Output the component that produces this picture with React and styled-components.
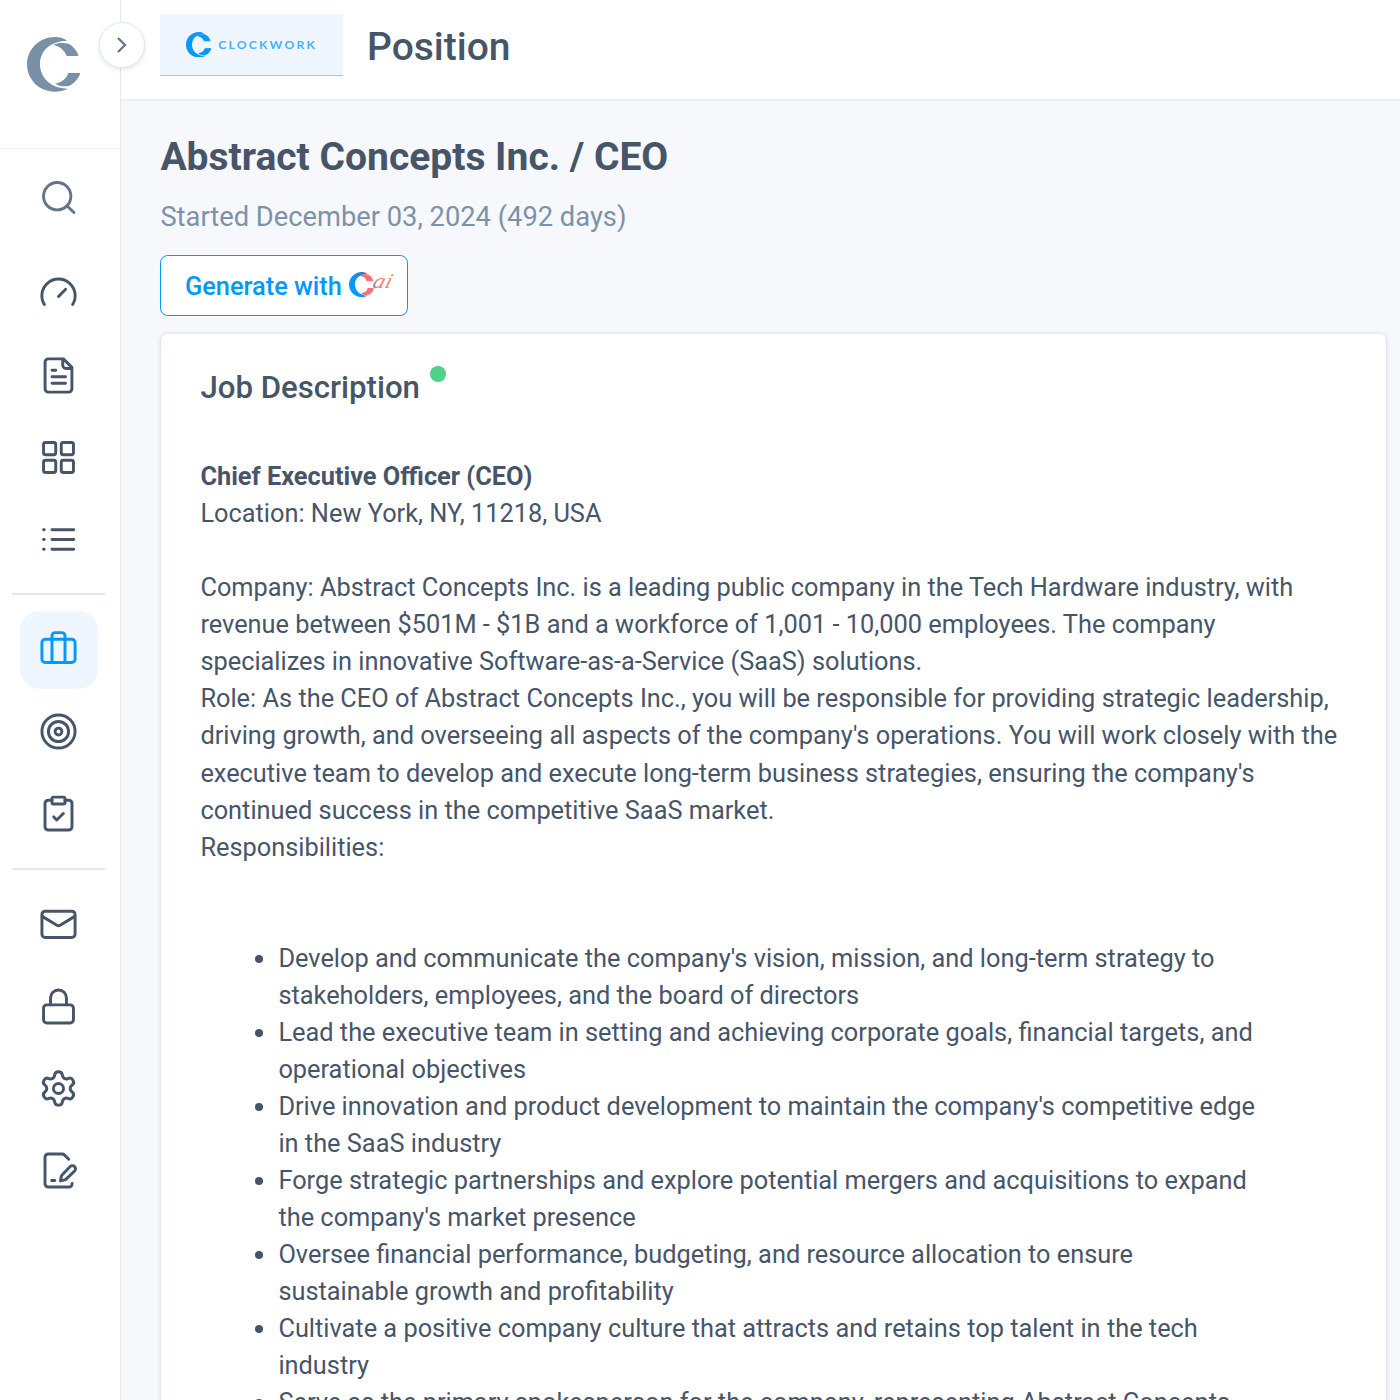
import React from "react";
import styled, { createGlobalStyle } from "styled-components";

const GlobalStyle = createGlobalStyle`
  * { box-sizing: border-box; }
  body { margin: 0; background: #f6f8fc; font-family: Roboto, "Liberation Sans", sans-serif; color: #475569; }
`;

const Shell = styled.div`
  display: flex;
  width: 1400px;
  height: 1400px;
  overflow: hidden;
`;

const Sidebar = styled.aside`
  position: relative;
  flex: none;
  width: 121px;
  background: #fff;
  border-right: 1px solid #e2e8f0;
`;

const Brand = styled.div`
  height: 149px;
  padding: 37px 0 0 27px;
  border-bottom: 1px solid #f1f5f9;
  color: #7a90a8;
`;

const Toggle = styled.button`
  position: absolute;
  z-index: 2;
  top: 22px;
  left: 99px;
  display: flex;
  align-items: center;
  justify-content: center;
  width: 46px;
  height: 46px;
  padding: 0;
  border: 1px solid #e2e8f0;
  border-radius: 50%;
  background: #fff;
  color: #64748b;
  box-shadow: 0 2px 4px rgba(71, 85, 105, 0.14);
`;

const SearchSlot = styled.div`
  display: flex;
  height: 105.8px;
  padding: 9.8px 0 0 19.5px;
`;

const NavGroup = styled.nav`
  display: flex;
  flex-direction: column;
  gap: 3.9px;
  padding-left: 19.5px;
`;

const NavItem = styled.a`
  display: flex;
  align-items: center;
  justify-content: center;
  width: 78px;
  height: 78px;
  border-radius: 19.5px;
  color: ${(p) => (p.$active ? "#0399f7" : p.$soft ? "#64748b" : "#475569")};
  background: ${(p) => (p.$active ? "#eff6ff" : "transparent")};
`;

const Divider = styled.div`
  width: 93px;
  height: 2px;
  margin: ${(p) => p.$margin};
  background: #e2e8f0;
`;

const Main = styled.div`
  flex: 1;
  min-width: 0;
  display: flex;
  flex-direction: column;
`;

const Header = styled.header`
  flex: none;
  display: flex;
  align-items: flex-start;
  gap: 24px;
  height: 101px;
  padding: 14px 39px 0;
  background: #fff;
  border-bottom: 2px solid #e9eef4;
`;

const ClientLogo = styled.div`
  display: flex;
  align-items: center;
  gap: 7.2px;
  width: 183px;
  height: 62px;
  padding-left: 26.4px;
  background: #eff6ff;
  border-bottom: 1px solid #90cdf9;
  color: #0399f7;
`;

const ClientName = styled.span`
  padding-top: 2px;
  font: 700 12.2px/1 Lato, sans-serif;
  letter-spacing: 2.2px;
  color: #45b2fa;
`;

const PageName = styled.h1`
  margin: 10px 0 0;
  font-size: 39px;
  line-height: 46px;
  font-weight: 500;
`;

const Content = styled.main`
  padding: 33px 13px 0 39px;
`;

const Title = styled.h2`
  margin: 0;
  padding-left: 0.4px;
  font-size: 39px;
  line-height: 46px;
  font-weight: 700;
`;

const Started = styled.p`
  margin: 21px 0 0;
  padding-left: 0.4px;
  font-size: 27.3px;
  line-height: 32px;
  color: #7c92aa;
`;

const Generate = styled.button`
  display: flex;
  align-items: center;
  gap: 7px;
  width: 248px;
  height: 61px;
  margin-top: 22px;
  padding: 3px 0 0 24px;
  border: 1px solid #0399f7;
  border-radius: 7.8px;
  background: #fff;
  color: #0399f7;
  font: 500 25.35px/1 Roboto, sans-serif;
`;

const Card = styled.section`
  height: 1200px;
  margin-top: 16px;
  padding: 38px 39px 0 39.4px;
  border: 1px solid #e2e8f0;
  border-top: 2px solid #e8edf3;
  border-radius: 7.8px;
  background: #fff;
  box-shadow: 0 2px 4px rgba(71, 85, 105, 0.14);
`;

const CardHead = styled.div`
  display: flex;
  gap: 10px;
`;

const CardTitle = styled.h3`
  margin: 0;
  font-size: 31.2px;
  line-height: 32px;
  font-weight: 500;
`;

const Status = styled.span`
  width: 15.6px;
  height: 15.6px;
  margin-top: -6px;
  border-radius: 50%;
  background: #51d088;
`;

const Body = styled.div`
  margin: 54.15px 4px 0 0;
  font-size: 25.35px;
  line-height: 37.05px;
  p { margin: 0; }
  p + p.gap { margin-top: 37.05px; }
`;

const Duties = styled.ul`
  margin: 74.1px 0 0;
  padding: 0 78px;
`;

const svgProps = { viewBox: "0 0 24 24", width: 39, height: 39, fill: "none", stroke: "currentColor", strokeWidth: 1.8, strokeLinecap: "round", strokeLinejoin: "round" };

const glyphs = {
  search: <><circle cx="11.2" cy="11.2" r="8.4" /><path d="M17.3 17.2l4.2 4" /></>,
  gauge: <><path d="M3.3 18.8A10.25 10.25 0 1 1 20.7 18.8" /><path d="M12 13.8l4.4-4.4" /></>,
  doc: <><path d="M15 1.75H5.75a2 2 0 0 0-2 2v16.5a2 2 0 0 0 2 2h12.5a2 2 0 0 0 2-2V7z" /><path d="M14.6 2v3.7a2 2 0 0 0 2 2h3.5M8 8.8h2.3M8 12.8h8.3M8 16.8h8.3" /></>,
  grid: <g>{[[2.8, 2.8], [13.7, 2.8], [2.8, 13.7], [13.7, 13.7]].map(([x, y]) => <rect key={`${x}-${y}`} x={x} y={y} width="7.5" height="7.5" rx="1.2" />)}</g>,
  list: <path d="M2.8 6h.4M2.8 12h.4M2.8 18h.4M8 6h13.4M8 12h13.4M8 18h13.4" />,
  position: <><rect x="1.8" y="5.7" width="20.4" height="14.3" rx="2" /><path d="M8 20V3.5a1.9 1.9 0 0 1 1.9-1.9h4.2A1.9 1.9 0 0 1 16 3.5V20" /></>,
  target: <><circle cx="12" cy="12" r="10.2" /><circle cx="12" cy="12" r="6.2" /><circle cx="12" cy="12" r="2.1" /></>,
  clipboard: <><path d="M8 3.8H5.7a2 2 0 0 0-2 2v14.4a2 2 0 0 0 2 2h12.6a2 2 0 0 0 2-2V5.8a2 2 0 0 0-2-2H16" /><rect x="8" y="1.9" width="8" height="4.2" rx=".9" /><path d="M9.1 14.1l1.8 1.9 4.1-4" /></>,
  mail: <><rect x="1.8" y="3.8" width="20.4" height="16.2" rx="2" /><path d="M2 7l9 5.4q1 .8 2 0L22 7" /></>,
  lock: <><rect x="2.8" y="11" width="18.4" height="11.1" rx="2" /><path d="M7.1 11V6.7a4.9 4.9 0 0 1 9.8 0V11" /></>,
  gear: <><path transform="translate(-.36 -.36) scale(1.03)" d="M9.671 4.136a2.34 2.34 0 0 1 4.659 0 2.34 2.34 0 0 0 3.319 1.915 2.34 2.34 0 0 1 2.33 4.033 2.34 2.34 0 0 0 0 3.831 2.34 2.34 0 0 1-2.33 4.033 2.34 2.34 0 0 0-3.319 1.915 2.34 2.34 0 0 1-4.659 0 2.34 2.34 0 0 0-3.32-1.915 2.34 2.34 0 0 1-2.33-4.033 2.34 2.34 0 0 0 0-3.831A2.34 2.34 0 0 1 6.35 6.051a2.34 2.34 0 0 0 3.319-1.915" /><circle cx="12" cy="12" r="3.1" /></>,
  sign: <><path d="M18.3 5.1L15.6 2.4a2 2 0 0 0-1.4-.6H5.7a2 2 0 0 0-2 2v16.4a2 2 0 0 0 2 2h12.7a2 2 0 0 0 2-2.2M7.8 18.1h1.9" /><path d="M13.2 18.4l.5-2.7q.1-.5.5-.9l5-5.2a1.9 1.9 0 0 1 2.7 2.7l-5.2 5q-.4.4-.9.5z" /></>,
};

const Icon = ({ name }) => <svg {...svgProps}>{glyphs[name]}</svg>;

const Mark = ({ width, fill = "currentColor", tip = fill, joined }) => (
  <svg viewBox="81 110 160 164" width={width} height={width * 1.025}>
    <g fill={tip} stroke={joined ? tip : "none"} strokeWidth="7" strokeLinejoin="round">
      <path d="M160 134C172 127 190 127 206 130C221 138 231 151 236 167L200 167C194 150 180 138 160 134Z" />
      <path d="M205 218L241 218C236 235 222 250 206 257C190 260 176 256 165 250C185 247 200 234 205 218Z" />
    </g>
    <path fill={fill} d="M202 121C190 113 177 110 165 110C118 110 81 147 81 192C81 238 118 274 163 274C178 274 192 271 204 265C153 265 120 233 120 192C120 152 150 122 202 121Z" />
  </svg>
);

const CaiSvg = styled.svg`
  margin-top: -4px;
  overflow: visible;
`;

const CaiLogo = () => (
  <CaiSvg width="46" height="28" viewBox="0 0 46 28">
    <defs>
      <linearGradient id="mark" x1="0" y1="1" x2="1" y2="0"><stop offset=".55" stopColor="#0399f7" /><stop offset="1" stopColor="#695f9e" /></linearGradient>
      <linearGradient id="ai" x1="0" y1="1" x2="1" y2="0"><stop offset="0" stopColor="#5b8fe8" /><stop offset=".45" stopColor="#f97f7b" /><stop offset="1" stopColor="#f9a85c" /></linearGradient>
    </defs>
    <svg x="0" y="1" width="25" height="26"><Mark width={24.5} fill="url(#mark)" tip="#fb6f7c" joined /></svg>
    <text transform="translate(22.5 17) skewX(-16)" textLength="19" lengthAdjust="spacingAndGlyphs" fontFamily="Liberation Serif, serif" fontStyle="italic" fontSize="21" fill="url(#ai)">ai</text>
  </CaiSvg>
);

const duties = [
  "Develop and communicate the company's vision, mission, and long-term strategy to stakeholders, employees, and the board of directors",
  "Lead the executive team in setting and achieving corporate goals, financial targets, and operational objectives",
  "Drive innovation and product development to maintain the company's competitive edge in the SaaS industry",
  "Forge strategic partnerships and explore potential mergers and acquisitions to expand the company's market presence",
  "Oversee financial performance, budgeting, and resource allocation to ensure sustainable growth and profitability",
  "Cultivate a positive company culture that attracts and retains top talent in the tech industry",
  "Serve as the primary spokesperson for the company, representing Abstract Concepts",
];

const Nav = ({ items, active }) => (
  <NavGroup>
    {items.map((n) => <NavItem key={n} $active={n === active}><Icon name={n} /></NavItem>)}
  </NavGroup>
);

export default function App() {
  return (
    <>
      <GlobalStyle />
      <Shell>
        <Sidebar>
          <Brand><Mark width={53.3} /></Brand>
          <Toggle aria-label="Expand menu">
            <svg width="12" height="18" viewBox="0 0 12 18" fill="none" stroke="currentColor" strokeWidth="2.2"><path d="M2 2l7 7-7 7" /></svg>
          </Toggle>
          <SearchSlot><NavItem $soft><Icon name="search" /></NavItem></SearchSlot>
          <Nav items={["gauge", "doc", "grid", "list"]} />
          <Divider $margin="15px 0 15.4px 12px" />
          <Nav items={["position", "target", "clipboard"]} active="position" />
          <Divider $margin="15.2px 0 15.6px 12px" />
          <Nav items={["mail", "lock", "gear", "sign"]} />
        </Sidebar>
        <Main>
          <Header>
            <ClientLogo><Mark width={24.7} joined /><ClientName>CLOCKWORK</ClientName></ClientLogo>
            <PageName>Position</PageName>
          </Header>
          <Content>
            <Title>Abstract Concepts Inc. / CEO</Title>
            <Started>Started December 03, 2024 (492 days)</Started>
            <Generate>Generate with <CaiLogo /></Generate>
            <Card>
              <CardHead><CardTitle>Job Description</CardTitle><Status /></CardHead>
              <Body>
                <p><strong>Chief Executive Officer (CEO)</strong></p>
                <p>Location: New York, NY, 11218, USA</p>
                <p className="gap">Company: Abstract Concepts Inc. is a leading public company in the Tech Hardware industry, with revenue between $501M - $1B and a workforce of 1,001 - 10,000 employees. The company specializes in innovative Software-as-a-Service (SaaS) solutions.</p>
                <p>Role: As the CEO of Abstract Concepts Inc., you will be responsible for providing strategic leadership, driving growth, and overseeing all aspects of the company's operations. You will work closely with the executive team to develop and execute long-term business strategies, ensuring the company's continued success in the competitive SaaS market.</p>
                <p>Responsibilities:</p>
                <Duties>{duties.map((d) => <li key={d}>{d}</li>)}</Duties>
              </Body>
            </Card>
          </Content>
        </Main>
      </Shell>
    </>
  );
}
